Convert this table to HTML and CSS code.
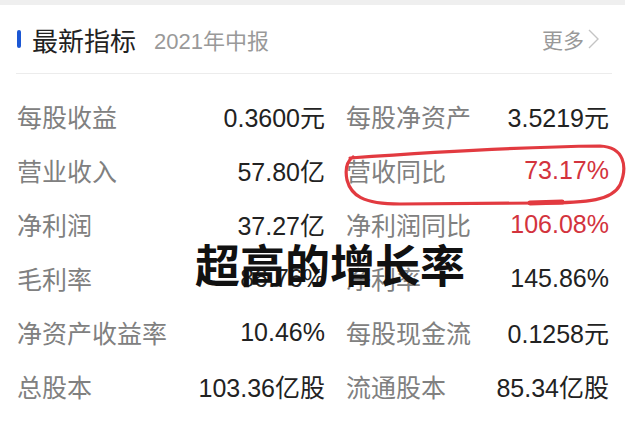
FILE: index.html
```html
<!DOCTYPE html>
<html lang="zh-CN">

<head>
    <meta charset="UTF-8">
    <meta name="viewport" content="width=device-width, initial-scale=1.0">
    <title>最新指标</title>
    <link rel="stylesheet" href="styles.css">
</head>

<body>

    <div class="top-strip"></div>

    <div class="panel">
        <div class="panel-header">
            <span class="mark"></span>
            <h2>最新指标</h2>
            <span class="period">2021年中报</span>
            <a class="more" href="javascript:void(0);">更多
                <svg width="13" height="22" viewBox="0 0 13 22"><path d="M2 2 L11 11 L2 20" fill="none" stroke="#c4c4c4" stroke-width="1.4"/></svg>
            </a>
        </div>

        <div class="stats">
            <div class="item"><span class="label">每股收益</span><span class="value">0.3600元</span></div>
            <div class="item"><span class="label">每股净资产</span><span class="value">3.5219元</span></div>

            <div class="item"><span class="label">营业收入</span><span class="value">57.80亿</span></div>
            <div class="item"><span class="label">营收同比</span><span class="value up">73.17%</span></div>

            <div class="item"><span class="label">净利润</span><span class="value">37.27亿</span></div>
            <div class="item"><span class="label">净利润同比</span><span class="value up">106.08%</span></div>

            <div class="item"><span class="label">毛利率</span><span class="value">86.76%</span></div>
            <div class="item"><span class="label">净利率</span><span class="value">145.86%</span></div>

            <div class="item"><span class="label">净资产收益率</span><span class="value">10.46%</span></div>
            <div class="item"><span class="label">每股现金流</span><span class="value">0.1258元</span></div>

            <div class="item"><span class="label">总股本</span><span class="value">103.36亿股</span></div>
            <div class="item"><span class="label">流通股本</span><span class="value">85.34亿股</span></div>
        </div>
    </div>

    <!-- 手绘标注 -->
    <svg class="scribble" width="640" height="438" viewBox="0 0 640 438">
        <path d="M350 158 C 420 153, 520 147, 600 146 C 624 147, 628 166, 620 185 C 612 200, 590 203, 540 203 L 400 204 C 362 204, 351 195, 347 180 C 345 170, 346 162, 353 157"
              fill="none" stroke="#e23a40" stroke-width="3.2" stroke-linecap="round"/>
        <path d="M530 203 L 562 202" stroke="#e23a40" stroke-width="5" stroke-linecap="round"/>
    </svg>
    <div class="caption">超高的增长率</div>

</body>

</html>
```

FILE: styles.css
```css
body {
    font-family: "Liberation Sans", "Noto Sans CJK SC", sans-serif;
    background-color: #fff;
    margin: 0;
    width: 640px;
    height: 438px;
    position: relative;
    overflow: hidden;
}

.top-strip {
    height: 5px;
    width: 625px;
    background-color: #efefef;
}

.panel {
    padding: 0 0 0 16px;
}

.panel-header {
    display: flex;
    align-items: center;
    height: 68px;
    width: 596px;
    border-bottom: 1px solid #ececec;
}

.mark {
    width: 4px;
    height: 18px;
    margin-left: 1px;
    border-radius: 2px;
    background-color: #1b57d4;
}

h2 {
    margin: 0 0 0 11px;
    font-size: 26px;
    font-weight: normal;
    color: #222;
}

.period {
    margin-left: 18px;
    font-size: 22px;
    color: #999;
}

.more {
    margin-left: auto;
    margin-right: 12px;
    display: flex;
    align-items: center;
    gap: 3px;
    font-size: 21px;
    color: #999;
    text-decoration: none;
}

.stats {
    display: grid;
    grid-template-columns: 308px 263px;
    grid-auto-rows: 54px;
    column-gap: 21px;
    padding: 15px 0 0 1px;
}

.item {
    display: flex;
    justify-content: space-between;
    align-items: center;
    font-size: 25px;
}

.label {
    color: #808080;
}

.value {
    color: #222;
}

.value.up {
    color: #d3333d;
}

.scribble {
    position: absolute;
    left: 0;
    top: 0;
    pointer-events: none;
}

.caption {
    position: absolute;
    left: 195px;
    top: 236px;
    font-family: "Noto Sans CJK SC", sans-serif;
    font-size: 45px;
    line-height: 56px;
    font-weight: bold;
    color: #111;
}
```
